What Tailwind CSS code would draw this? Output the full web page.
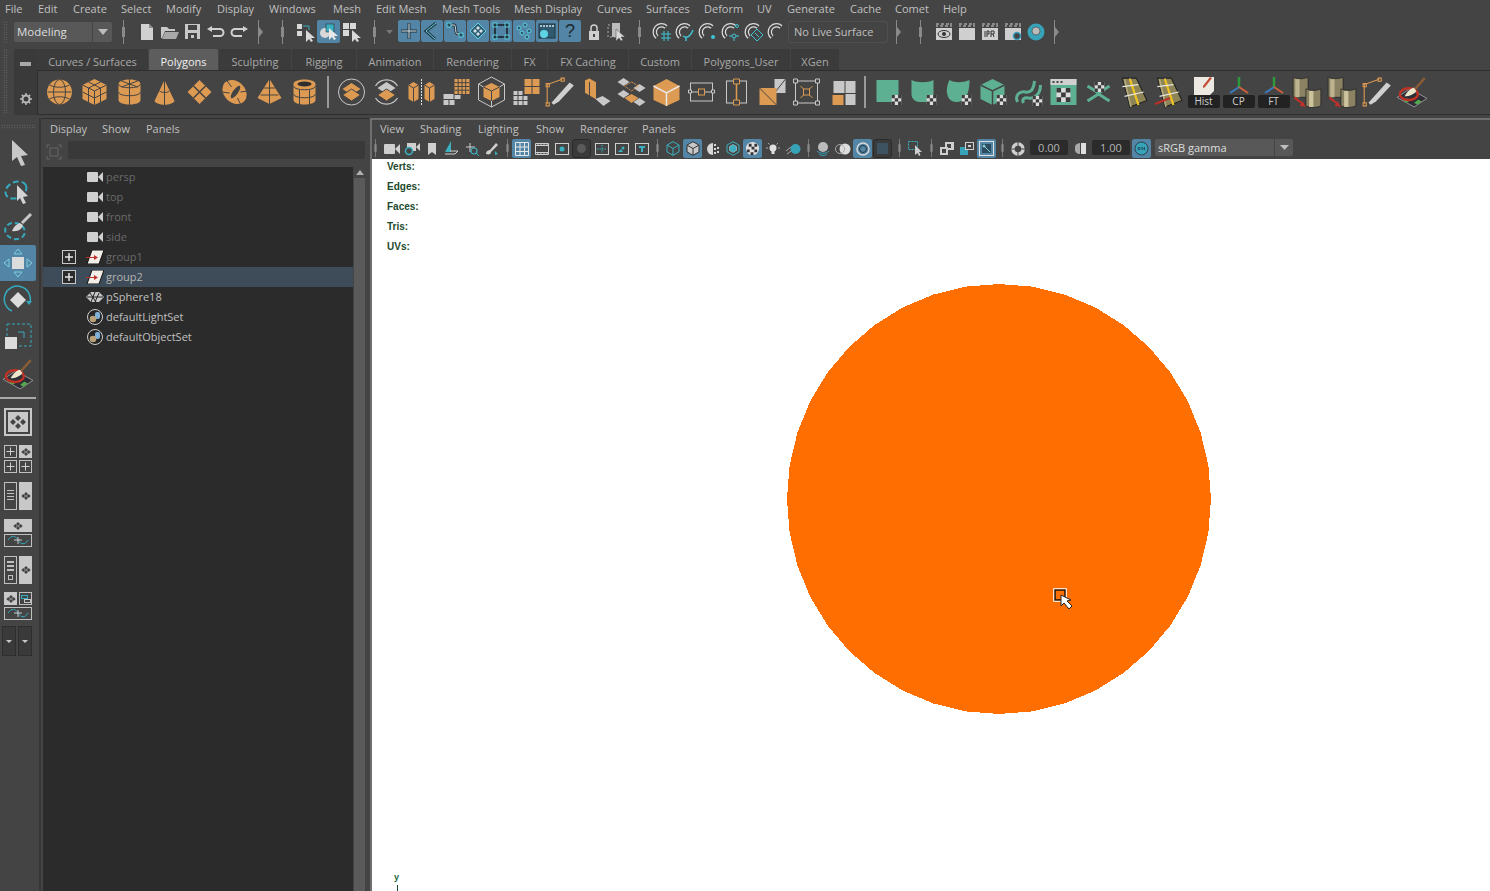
<!DOCTYPE html>
<html lang="en">
<head>
<meta charset="UTF-8">
<title>Maya</title>
<script src="https://cdn.jsdelivr.net/npm/@tailwindcss/browser@4"></script>
</head>
<body class="w-[1490px] h-[891px] overflow-hidden bg-[#444444] text-[#c0c0c0] text-[11px] leading-none font-['Open_Sans',sans-serif] flex flex-col">

<!-- shared bits -->
<svg class="hidden">
  <symbol id="h" viewBox="0 0 5 24"><path d="M2.500 0v24" stroke="#8a8a8a"/><rect x="1" y="7" width="3" height="10" fill="#8a8a8a"/></symbol>
  <symbol id="coll" viewBox="0 0 8 24"><path d="M1.500 0v24" stroke="#8a8a8a"/><path d="M2 7l4 5-4 5z" fill="#8a8a8a"/></symbol>
  <symbol id="chk" viewBox="0 0 10 10"><rect width="10" height="10" fill="#dcdcdc"/><path d="M0 0h3.300v3.300H0zM6.600 0H10v3.300H6.600zM3.300 3.300h3.300v3.300H3.300zM0 6.600h3.300V10H0zM6.600 6.600H10V10H6.600z" fill="#3b3b3b"/></symbol>
  <symbol id="cam" viewBox="0 0 16 10"><rect x="0" y="0" width="11" height="10" rx="1" fill="#cfcfcf"/><path d="M11 5l5-5v10z" fill="#cfcfcf"/></symbol>
  <symbol id="grp" viewBox="0 0 18 14"><path d="M6 0h12l-5 14H1z" fill="#f2efe8" stroke="#111"/><path d="M0 7.500h9" stroke="#c0302a"/><path d="M12 7.500L8 5v5z" fill="#c0302a"/></symbol>
  <symbol id="set" viewBox="0 0 16 16"><circle cx="8" cy="8" r="7.500" fill="#262626" stroke="#cfcfcf"/><rect x="8" y="3" width="5" height="7" rx="2" fill="#7fb0d8"/><circle cx="6" cy="10" r="3.300" fill="#b9a27a"/></symbol>
  <symbol id="plus" viewBox="0 0 14 14"><rect x=".5" y=".5" width="13" height="13" fill="#2b2b2b" stroke="#c8c8c8"/><path d="M3 7h8M7 3v8" stroke="#e6e6e6" stroke-width="1.500"/></symbol>
  <symbol id="cross" viewBox="0 0 13 13"><rect x=".5" y=".5" width="12" height="12" fill="none" stroke="#c0c0c0"/><path d="M2.500 6.500h8M6.500 2.500v8" stroke="#d0d0d0"/></symbol>
  <symbol id="dots" viewBox="0 0 10 8"><path d="M5 0l2 2-2 2-2-2zM2.300 2l2 2-2 2-2-2zM7.700 2l2 2-2 2-2-2zM5 4l2 2-2 2-2-2z" fill="#444"/></symbol>
  <symbol id="magnet" viewBox="0 0 20 20"><path d="M5 15A6.500 6.500 0 0 1 14 5" fill="none" stroke="#dcdcdc" stroke-width="4.500"/><path d="M5 15A6.500 6.500 0 0 1 14 5" fill="none" stroke="#444" stroke-width="2"/></symbol>
  <symbol id="barrel" viewBox="0 0 30 30"><path d="M2 1c4 2 10 2 14 0v19H2z" fill="#8b8264" stroke="#222" stroke-width=".7"/><rect x="4" y="3" width="4" height="17" fill="#bdb48f"/><path d="M14 12c4 2 10 2 14 0v16c-4 2-10 2-14 0z" fill="#8b8264" stroke="#222" stroke-width=".7"/><rect x="17" y="14" width="4" height="15" fill="#cdc49e"/><path d="M3 20l8 6" stroke="#c0302a" stroke-width="2"/><path d="M14 29l-6-1 3-4z" fill="#c0302a"/></symbol>
  <symbol id="road" viewBox="0 0 30 30"><path d="M6 2h13l10 21-16 6z" fill="#8d8458" stroke="#222"/><path d="M8 3l6 26M13 2l8 25" stroke="#b4ab7e" stroke-width="1.500"/><path d="M13 3l8 24" stroke="#eec21c" stroke-width="2"/><path d="M6 10l15-2M8 19l18-4" stroke="#e8e8e0" stroke-width="1.200"/></symbol>
  <symbol id="clap" viewBox="0 0 18 18"><path d="M1 1h3M6 1h3M11 1h3M15 1h2M1 3h2M5 3h3M10 3h3M15 3h2" stroke="#cfcfcf"/><rect x="1" y="5" width="16" height="12" fill="#cfcfcf"/></symbol>
  <symbol id="sculpt" viewBox="0 0 30 30"><path d="M1 20l12-8 16 9-12 8z" fill="#2e2e36" stroke="#b0b0b0" stroke-width=".7"/><path d="M7 23l3-2 3 2-3 2zM17 25l4-3 3 2-4 3z" fill="#54a84d"/><ellipse cx="12" cy="17" rx="8.500" ry="5.500" fill="none" stroke="#c33024" stroke-width="2.200"/><path d="M8 19c2-4 6-8 9-8l2 3c-2 3-6 5-11 5z" fill="#ece7cc"/><path d="M18 12l9-10" stroke="#8a5d34" stroke-width="2.200"/></symbol>
  <symbol id="kn" viewBox="0 0 30 30"><path d="M7 25L24 6l4 3-14 15-5 3z" fill="#d0d0d0"/><path d="M3 26V8L17 3" fill="none" stroke="#dd9a52"/><path d="M2 7h3v3H2zM16 2h3v3h-3zM2 25h3v3H2z" fill="none" stroke="#dd9a52"/></symbol>
</svg>

<!-- main menu -->
<nav class="h-[19px] pb-[2px] flex items-center pl-[5px] shrink-0">
  <span class="w-[33px]">File</span><span class="w-[35px]">Edit</span><span class="w-[48px]">Create</span><span class="w-[45px]">Select</span><span class="w-[51px]">Modify</span><span class="w-[52px]">Display</span><span class="w-[64px]">Windows</span><span class="w-[43px]">Mesh</span><span class="w-[66px]">Edit Mesh</span><span class="w-[72px]">Mesh Tools</span><span class="w-[83px]">Mesh Display</span><span class="w-[49px]">Curves</span><span class="w-[58px]">Surfaces</span><span class="w-[53px]">Deform</span><span class="w-[30px]">UV</span><span class="w-[63px]">Generate</span><span class="w-[45px]">Cache</span><span class="w-[48px]">Comet</span><span>Help</span>
</nav>

<!-- status line -->
<div class="h-[25px] flex items-center shrink-0">
  <div class="w-[14px] h-[22px] pl-[3px] flex flex-col justify-between"><div class="w-[5px] h-full bg-[radial-gradient(#777_0.6px,transparent_0.8px)] bg-[length:2.500px_2.500px]"></div></div>
  <div class="w-[98px] h-[20px] flex rounded-[2px] overflow-hidden">
    <div class="w-[78px] bg-[#585858] flex items-center pl-[3px] text-[#dedede] text-[11.500px]">Modeling</div>
    <div class="flex-1 ml-[1px] bg-[#585858] flex items-center justify-center"><svg class="w-[10px] h-[6px]" viewBox="0 0 10 6"><path d="M0 0h10L5 6z" fill="#bdbdbd"/></svg></div>
  </div>
  <div class="w-[23px] flex justify-center"><svg class="w-[5px] h-[24px]"><use href="#h"/></svg></div>
  <div class="flex w-[115px]">
    <div class="w-[23px] h-[23px] flex items-center justify-center"><svg class="w-[14px] h-[16px]" viewBox="0 0 14 16"><path d="M1 0h8l4 4v12H1z" fill="#d0d0d0"/><path d="M9 0v4h4" fill="#8c8c8c"/></svg></div>
    <div class="w-[23px] h-[23px] flex items-center justify-center"><svg class="w-[18px] h-[14px]" viewBox="0 0 18 14"><path d="M0 2h6l2 2h6v2H4L1 13H0z" fill="#c8c8c8"/><path d="M4 7h14l-3 7H1z" fill="#a8a8a8"/></svg></div>
    <div class="w-[23px] h-[23px] flex items-center justify-center"><svg class="w-[15px] h-[15px]" viewBox="0 0 15 15"><path d="M0 0h15v15H0z" fill="#c8c8c8"/><path d="M3 1h9v5H3z" fill="#444"/><rect x="3" y="9" width="9" height="6" fill="#444"/><rect x="6" y="11" width="3" height="3" fill="#c8c8c8"/></svg></div>
    <div class="w-[23px] h-[23px] flex items-center justify-center"><svg class="w-[18px] h-[12px]" viewBox="0 0 18 12"><path d="M0 3l5-3v2h8a4.500 4.500 0 0 1 0 9H6V9h7a2.500 2.500 0 0 0 0-5H5v2z" fill="#d0d0d0"/></svg></div>
    <div class="w-[23px] h-[23px] flex items-center justify-center"><svg class="w-[18px] h-[12px]" viewBox="0 0 18 12"><path d="M18 3l-5-3v2H5a4.500 4.500 0 0 0 0 9h7V9H5a2.500 2.500 0 0 1 0-5h8v2z" fill="#d0d0d0"/></svg></div>
  </div>
  <div class="w-[21px] flex justify-center"><svg class="w-[8px] h-[24px]"><use href="#coll"/></svg></div>
  <div class="w-[23px] flex justify-center"><svg class="w-[5px] h-[24px]"><use href="#h"/></svg></div>
  <div class="flex">
    <div class="w-[23px] h-[23px] flex items-center justify-center"><svg class="w-[20px] h-[20px]" viewBox="0 0 20 20"><path d="M1 2h5v5H1zM1 9h5v5H1z" fill="#d8d8d8"/><path d="M7 4h6v4" fill="none" stroke="#3ab0c0"/><path d="M10 8v12l3-3 2 3 2-1-2-3h4z" fill="#d8d8d8"/></svg></div>
    <div class="w-[23px] h-[23px] rounded-[2px] bg-[#5285a6] flex items-center justify-center"><svg class="w-[20px] h-[20px]" viewBox="0 0 20 20"><circle cx="6" cy="11" r="5" fill="#d8d8d8"/><rect x="7" y="2" width="8" height="8" fill="#3ab0c0" stroke="#222" stroke-width=".5"/><path d="M10 6v12l3-3 2 3 2-1-2-3h4z" fill="#e8e8e8"/></svg></div>
    <div class="w-[23px] h-[23px] flex items-center justify-center"><svg class="w-[20px] h-[20px]" viewBox="0 0 20 20"><path d="M1 1h6v6H1zM8 1h6v6H8zM1 8h6v6H1z" fill="#d8d8d8"/><path d="M10 8v12l3-3 2 3 2-1-2-3h4z" fill="#d8d8d8"/></svg></div>
  </div>
  <div class="w-[23px] flex justify-center"><svg class="w-[5px] h-[24px]"><use href="#h"/></svg></div>
  <div class="w-[12px] flex items-center"><svg class="w-[7px] h-[4px]" viewBox="0 0 7 4"><path d="M0 0h7L3.500 4z" fill="#777"/></svg></div>
  <div class="flex">
    <div class="w-[22px] h-[22px] mr-[1px] rounded-[2px] bg-[#5285a6] flex items-center justify-center"><svg class="w-[18px] h-[18px]" viewBox="0 0 18 18"><path d="M1 9h16M9 1v16" stroke="#223540" stroke-width="3"/><path d="M1.500 9h15M9 1.500v15" stroke="#d8e4ea"/></svg></div>
    <div class="w-[22px] h-[22px] mr-[1px] rounded-[2px] bg-[#5285a6] flex items-center justify-center"><svg class="w-[18px] h-[18px]" viewBox="0 0 18 18"><path d="M13 1L3 9l9 8" fill="none" stroke="#223540" stroke-width="3"/><path d="M13 1L3 9l9 8" fill="none" stroke="#5fd4e4"/></svg></div>
    <div class="w-[22px] h-[22px] mr-[1px] rounded-[2px] bg-[#5285a6] flex items-center justify-center"><svg class="w-[18px] h-[18px]" viewBox="0 0 18 18"><path d="M3 3h5c3 0 0 9 4 9h3" fill="none" stroke="#223540" stroke-width="3"/><path d="M3 3h5c3 0 0 9 4 9h3" fill="none" stroke="#d8e4ea"/><path d="M1 1h4v4H1zM13 11h4v4h-4z" fill="#2b4a5a" stroke="#5fd4e4"/></svg></div>
    <div class="w-[22px] h-[22px] mr-[1px] rounded-[2px] bg-[#5285a6] flex items-center justify-center"><svg class="w-[18px] h-[18px]" viewBox="0 0 18 18"><path d="M9 1l8 8-8 8-8-8z" fill="#2f5a70" stroke="#5fd4e4"/><path d="M9 4l2 2-2 2-2-2zM6 7l2 2-2 2-2-2zM12 7l2 2-2 2-2-2zM9 10l2 2-2 2-2-2z" fill="#cfe0e6"/></svg></div>
    <div class="w-[22px] h-[22px] mr-[1px] rounded-[2px] bg-[#5285a6] flex items-center justify-center"><svg class="w-[18px] h-[18px]" viewBox="0 0 18 18"><rect x="3" y="3" width="12" height="12" fill="none" stroke="#223540" stroke-width="2"/><path d="M1 1h4v4H1zM13 1h4v4h-4zM1 13h4v4H1zM13 13h4v4h-4z" fill="#223540" stroke="#5fd4e4"/></svg></div>
    <div class="w-[22px] h-[22px] mr-[1px] rounded-[2px] bg-[#5285a6] flex items-center justify-center"><svg class="w-[18px] h-[18px]" viewBox="0 0 18 18"><g fill="#2f5a70" stroke="#5fd4e4"><circle cx="4" cy="6" r="2"/><circle cx="10" cy="3" r="2"/><circle cx="14" cy="9" r="2"/><circle cx="7" cy="11" r="2"/><circle cx="12" cy="15" r="2"/></g></svg></div>
    <div class="w-[22px] h-[22px] mr-[1px] rounded-[2px] bg-[#5285a6] flex items-center justify-center"><svg class="w-[18px] h-[18px]" viewBox="0 0 18 18"><rect x="1" y="2" width="16" height="14" fill="#2f5a70" stroke="#223540"/><path d="M2 4h14" stroke="#d8e4ea" stroke-dasharray="2 1" stroke-width="1.500"/><circle cx="6" cy="12" r="4" fill="#5fd4e4"/></svg></div>
    <div class="w-[22px] h-[22px] mr-[1px] rounded-[2px] bg-[#5285a6] flex items-center justify-center text-[#1d2a30] text-[18px] font-['Liberation_Sans',sans-serif]">?</div>
    <div class="w-[23px] h-[23px] flex items-center justify-center"><svg class="w-[12px] h-[16px]" viewBox="0 0 12 16"><path d="M3 7V4a3 3 0 0 1 6 0v3" fill="none" stroke="#cfcfcf" stroke-width="1.500"/><rect x="1" y="7" width="10" height="9" fill="#cfcfcf"/><rect x="5" y="10" width="2" height="3" fill="#444"/></svg></div>
    <div class="w-[23px] h-[23px] flex items-center justify-center"><svg class="w-[20px] h-[20px]" viewBox="0 0 20 20"><rect x="1" y="3" width="10" height="12" fill="none" stroke="#aaa" stroke-dasharray="2 2"/><rect x="5" y="1" width="8" height="14" fill="#bbb"/><path d="M9 7v12l3-3 2 3 2-1-2-3h4z" fill="#d8d8d8" stroke="#444" stroke-width=".5"/></svg></div>
  </div>
  <div class="w-[22px] flex justify-center"><svg class="w-[5px] h-[24px]"><use href="#h"/></svg></div>
  <div class="flex w-[138px]">
    <div class="w-[23px] h-[23px] flex items-center justify-center"><svg class="w-[20px] h-[20px]"><use href="#magnet"/><path d="M9 12h10M9 16h10M12 9v10M16 9v10" stroke="#3fc4d4"/></svg></div>
    <div class="w-[23px] h-[23px] flex items-center justify-center"><svg class="w-[20px] h-[20px]"><use href="#magnet"/><path d="M8 14c4 3 8 0 10-6M11 15v4" fill="none" stroke="#3fc4d4" stroke-width="1.500"/></svg></div>
    <div class="w-[23px] h-[23px] flex items-center justify-center"><svg class="w-[20px] h-[20px]"><use href="#magnet"/><circle cx="15" cy="15" r="2" fill="#3fc4d4"/></svg></div>
    <div class="w-[23px] h-[23px] flex items-center justify-center"><svg class="w-[20px] h-[20px]"><use href="#magnet"/><g fill="none" stroke="#3fc4d4"><circle cx="16" cy="4" r="1.500"/><circle cx="13" cy="14" r="2"/><path d="M8 14h3M15 14h3M13 16v3"/></g></svg></div>
    <div class="w-[23px] h-[23px] flex items-center justify-center"><svg class="w-[20px] h-[20px]"><use href="#magnet"/><path d="M13 7l6 6-6 6-6-6z" fill="#444" stroke="#3fc4d4"/><path d="M11 11l4 4" stroke="#3fc4d4"/></svg></div>
    <div class="w-[23px] h-[23px] flex items-center justify-center"><svg class="w-[20px] h-[20px]"><use href="#magnet"/></svg></div>
  </div>
  <div class="w-[100px] h-[22px] border border-[#4f4f4f] rounded-[2px] flex items-center pl-[5px]">No Live Surface</div>
  <div class="w-[21px] flex justify-center"><svg class="w-[8px] h-[24px]"><use href="#coll"/></svg></div>
  <div class="w-[23px] flex justify-center"><svg class="w-[5px] h-[24px]"><use href="#h"/></svg></div>
  <div class="flex w-[115px]">
    <div class="w-[23px] h-[23px] flex items-center justify-center"><svg class="w-[18px] h-[18px]"><use href="#clap"/><ellipse cx="9" cy="11" rx="6" ry="3.500" fill="none" stroke="#333"/><circle cx="9" cy="11" r="2" fill="#333"/></svg></div>
    <div class="w-[23px] h-[23px] flex items-center justify-center"><svg class="w-[18px] h-[18px]"><use href="#clap"/></svg></div>
    <div class="w-[23px] h-[23px] flex items-center justify-center"><svg class="w-[18px] h-[18px]"><use href="#clap"/><path d="M4 8v6M6 8v6M6 8h2v3H6M10 8v6M10 8h3v3h-3M12 11l1 3" fill="none" stroke="#333"/></svg></div>
    <div class="w-[23px] h-[23px] flex items-center justify-center"><svg class="w-[18px] h-[18px]"><use href="#clap"/><circle cx="13" cy="13" r="3.500" fill="#444" stroke="#3a9fc0" stroke-width="1.500"/></svg></div>
    <div class="w-[23px] h-[23px] flex items-center justify-center"><svg class="w-[18px] h-[18px]" viewBox="0 0 18 18"><circle cx="9" cy="9" r="8.500" fill="#37a3b8"/><circle cx="9" cy="8" r="4" fill="#bbb" stroke="#222" stroke-width=".5"/></svg></div>
  </div>
  <div class="w-[20px] flex justify-center"><svg class="w-[8px] h-[24px]"><use href="#coll"/></svg></div>
</div>

<!-- shelf -->
<div class="h-[66px] mt-[5px] flex shrink-0">
  <div class="w-[14px] pl-[3px]"><div class="w-[5px] h-full bg-[radial-gradient(#777_0.6px,transparent_0.8px)] bg-[length:2.500px_2.500px]"></div></div>
  <div class="w-[23px] h-full bg-[#3a3a3a] flex flex-col items-center justify-between py-[10px]">
    <div class="w-[11px] h-[4px] mt-[3px] bg-[#a8a8a8]"></div>
    <svg class="w-[12px] h-[12px]" viewBox="0 0 12 12"><circle cx="6" cy="6" r="3.500" fill="none" stroke="#b8b8b8" stroke-width="2"/><path d="M6 0v2M6 10v2M0 6h2M10 6h2M1.800 1.800l1.400 1.400M8.800 8.800l1.400 1.400M10.200 1.800L8.800 3.200M3.200 8.800l-1.400 1.400" stroke="#b8b8b8" stroke-width="1.500"/></svg>
  </div>
  <div class="flex-1 flex flex-col">
    <div class="h-[22px] flex items-end gap-[1px] text-[#a8a8a8] border-b border-[#2e2e2e]">
      <div class="w-[111px] h-[21px] pt-[3px] rounded-t-[2px] bg-[#3b3b3b] flex items-center justify-center">Curves / Surfaces</div>
      <div class="w-[69px] h-[21px] pt-[3px] rounded-t-[2px] bg-[#5d5d5d] text-[#f0f0f0] flex items-center justify-center">Polygons</div>
      <div class="w-[72px] h-[21px] pt-[3px] rounded-t-[2px] bg-[#3b3b3b] flex items-center justify-center">Sculpting</div>
      <div class="w-[64px] h-[21px] pt-[3px] rounded-t-[2px] bg-[#3b3b3b] flex items-center justify-center">Rigging</div>
      <div class="w-[76px] h-[21px] pt-[3px] rounded-t-[2px] bg-[#3b3b3b] flex items-center justify-center">Animation</div>
      <div class="w-[77px] h-[21px] pt-[3px] rounded-t-[2px] bg-[#3b3b3b] flex items-center justify-center">Rendering</div>
      <div class="w-[35px] h-[21px] pt-[3px] rounded-t-[2px] bg-[#3b3b3b] flex items-center justify-center">FX</div>
      <div class="w-[80px] h-[21px] pt-[3px] rounded-t-[2px] bg-[#3b3b3b] flex items-center justify-center">FX Caching</div>
      <div class="w-[62px] h-[21px] pt-[3px] rounded-t-[2px] bg-[#3b3b3b] flex items-center justify-center">Custom</div>
      <div class="w-[98px] h-[21px] pt-[3px] rounded-t-[2px] bg-[#3b3b3b] flex items-center justify-center">Polygons_User</div>
      <div class="w-[48px] h-[21px] pt-[3px] rounded-t-[2px] bg-[#3b3b3b] flex items-center justify-center">XGen</div>
    </div>
    <div class="flex-1 flex items-center pl-[4px] pb-[2px] border-b border-[#2e2e2e] border-l border-l-[#2e2e2e]">
      <!-- polygon primitives -->
      <svg class="w-[35px] h-[32px]" viewBox="-1.500 0 35 32"><circle cx="16" cy="16" r="12.500" fill="#dd9a52"/><g fill="none" stroke="#444"><ellipse cx="16" cy="16" rx="6" ry="12.500"/><path d="M4 16h24M6 9c6 3 14 3 20 0M6 23c6-3 14-3 20 0"/></g></svg>
      <svg class="w-[35px] h-[32px]" viewBox="-1.500 0 35 32"><path d="M16 3l12 6v14l-12 6-12-6V9z" fill="#dd9a52"/><path d="M4 9l12 6 12-6M16 15v14M10 6l12 6M22 6L10 12M4 16l12 6 12-6M10 12v14M22 12v14" fill="none" stroke="#444"/></svg>
      <svg class="w-[35px] h-[32px]" viewBox="-1.500 0 35 32"><path d="M5 8c0-6 22-6 22 0v16c0 6-22 6-22 0z" fill="#dd9a52"/><path d="M5 8c0 5 22 5 22 0M5 16c0 5 22 5 22 0M16 12v17M16 3v9M8 5l16 6M24 5L8 11" fill="none" stroke="#444"/></svg>
      <svg class="w-[35px] h-[32px]" viewBox="-1.500 0 35 32"><path d="M16 4l10 21c-3 5-17 5-20 0z" fill="#dd9a52"/><path d="M16 4v25M11 15c3 2 7 2 10 0" fill="none" stroke="#444"/></svg>
      <svg class="w-[35px] h-[32px]" viewBox="-1.500 0 35 32"><path d="M16 4l12 12-12 12L4 16z" fill="#dd9a52"/><path d="M10 10l12 12M22 10L10 22" stroke="#444" stroke-width="1.500"/></svg>
      <svg class="w-[35px] h-[32px]" viewBox="-1.500 0 35 32"><ellipse cx="16" cy="16" rx="13.500" ry="10.500" transform="rotate(45 16 16)" fill="#dd9a52"/><ellipse cx="17" cy="16" rx="7.500" ry="2.500" transform="rotate(-55 17 16)" fill="#444"/><path d="M8 4l5 7M3 16l8 1M22 28l-3-6M29 15l-7 1" stroke="#444"/></svg>
      <svg class="w-[35px] h-[32px]" viewBox="-1.500 0 35 32"><path d="M16 3l12 19-12 6-12-6z" fill="#dd9a52"/><path d="M16 3v25M10 12h12M7 19h18" stroke="#444"/></svg>
      <svg class="w-[35px] h-[32px]" viewBox="-1.500 0 35 32"><path d="M5 8c0-6 22-6 22 0v16c0 6-22 6-22 0z" fill="#dd9a52"/><ellipse cx="16" cy="8" rx="7" ry="2.500" fill="#2e2e2e"/><path d="M5 10c0 5 22 5 22 0M5 18c0 5 22 5 22 0M11 14v15M21 14v15" fill="none" stroke="#444"/></svg>
      <div class="w-[12px] h-[32px] flex justify-center"><div class="w-[2px] h-full bg-[#9a9a9a]"></div></div>
      <!-- modelling tools -->
      <svg class="w-[35px] h-[32px]" viewBox="-1.500 0 35 32"><circle cx="16" cy="16" r="13" fill="none" stroke="#c8c8c8"/><path d="M16 7l9 6-9 6-9-6z" fill="#dd9a52"/><path d="M16 13l9 6-9 6-9-6z" fill="#dd9a52" stroke="#444"/></svg>
      <svg class="w-[35px] h-[32px]" viewBox="-1.500 0 35 32"><path d="M5 10A13 13 0 0 1 27 10M27 22A13 13 0 0 1 5 22" fill="none" stroke="#c8c8c8" stroke-width="1.300"/><path d="M16 6l9 6-9 6-9-6z" fill="#c8c8c8"/><path d="M16 13l9 6-9 6-9-6z" fill="#dd9a52" stroke="#444"/></svg>
      <svg class="w-[35px] h-[32px]" viewBox="-1.500 0 35 32"><path d="M3 9l5-3 5 3v14l-5 3-5-3zM19 9l5-3 5 3v14l-5 3-5-3z" fill="#dd9a52"/><path d="M3 9l5 3 5-3M8 12v14M19 9l5 3 5-3M24 12v14" fill="none" stroke="#444"/><path d="M16 3v26" stroke="#e0e0e0" stroke-dasharray="2 1"/></svg>
      <svg class="w-[35px] h-[32px]" viewBox="-1.500 0 35 32"><rect x="14" y="3" width="15" height="15" fill="#dd9a52"/><path d="M17.700 3v15M21.500 3v15M25.200 3v15M14 6.700h15M14 10.500h15M14 14.200h15" stroke="#444"/><path d="M3 18h10v5H3zM14 19h6v4h-6zM3 24h5v5H3zM9 24h5v5H9z" fill="#c8c8c8"/></svg>
      <svg class="w-[35px] h-[32px]" viewBox="-1.500 0 35 32"><path d="M16 1l13 7v16l-13 7-13-7V8z" fill="none" stroke="#c8c8c8"/><path d="M16 7l8 4v10l-8 4-8-4V11z" fill="#dd9a52"/><path d="M8 11l8 4 8-4M16 15v10" fill="none" stroke="#444"/><path d="M3 8l5 3M29 8l-5 3M16 31v-6" stroke="#c8c8c8"/></svg>
      <svg class="w-[35px] h-[32px]" viewBox="-1.500 0 35 32"><path d="M14 3h7v7h-7zM22 3h7v7h-7zM14 11h7v7h-7zM22 11h7v7h-7z" fill="#dd9a52"/><path d="M3 15h4v4H3zM8 15h4v4H8zM3 20h4v4H3zM8 20h4v4H8zM13 20h4v4h-4zM3 25h4v4H3zM8 25h4v4H8zM13 25h4v4h-4z" fill="#c8c8c8"/></svg>
      <svg class="w-[35px] h-[32px]"><use href="#kn" width="32" height="32"/></svg>
      <svg class="w-[35px] h-[32px]" viewBox="-1.500 0 35 32"><path d="M9 2l7 4v18l-7-4-5-3V4z" fill="#dd9a52" stroke="#444"/><path d="M15 23l7-3 8 5-7 5z" fill="#c8c8c8"/><path d="M9 6v15" stroke="#444"/></svg>
      <svg class="w-[35px] h-[32px]" viewBox="-1.500 0 35 32"><path d="M8 2l6 4-6 4-6-4zM24 8l6 4-6 4-6-4zM8 14l6 4-6 4-6-4zM24 22l6 4-6 4-6-4z" fill="#c8c8c8"/><path d="M16 18l7 4-7 5-7-5z" fill="#dd9a52"/><path d="M16 6l7 4-7 5-7-5z" fill="none" stroke="#dd9a52" stroke-dasharray="2 1"/></svg>
      <svg class="w-[35px] h-[32px]" viewBox="-1.500 0 35 32"><path d="M16 3l13 7v14l-13 6-13-6V10z" fill="#dd9a52"/><path d="M3 10l13 7 13-7M16 17v13" fill="none" stroke="#e8e8e8" stroke-width="1.500"/></svg>
      <svg class="w-[35px] h-[32px]" viewBox="-1.500 0 35 32"><rect x="5" y="7" width="22" height="18" fill="none" stroke="#c8c8c8"/><path d="M3 16h26" stroke="#c8c8c8"/><rect x="13" y="13" width="6" height="6" fill="#444" stroke="#dd9a52"/><path d="M3 14h3v3H3zM26 14h3v3h-3z" fill="#444" stroke="#c8c8c8"/></svg>
      <svg class="w-[35px] h-[32px]" viewBox="-1.500 0 35 32"><rect x="6" y="5" width="20" height="22" fill="none" stroke="#c8c8c8"/><path d="M16 8v16" stroke="#dd9a52" stroke-width="1.500"/><path d="M13 3h6v5h-6zM13 24h6v5h-6z" fill="#444" stroke="#dd9a52"/></svg>
      <svg class="w-[35px] h-[32px]" viewBox="-1.500 0 35 32"><path d="M19 3h11v14H19z" fill="#c8c8c8"/><path d="M30 3L19 17" stroke="#444"/><rect x="4" y="12" width="17" height="17" fill="#dd9a52"/><path d="M4 12l17 17" stroke="#444"/></svg>
      <svg class="w-[35px] h-[32px]" viewBox="-1.500 0 35 32"><rect x="5" y="5" width="22" height="22" fill="none" stroke="#c8c8c8"/><path d="M10 10l12 12M22 10L10 22" stroke="#dd9a52"/><rect x="13" y="13" width="6" height="6" fill="#444" stroke="#dd9a52"/><path d="M3 3h4v4H3zM25 3h4v4h-4zM3 25h4v4H3zM25 25h4v4h-4z" fill="#444" stroke="#c8c8c8"/></svg>
      <svg class="w-[35px] h-[32px]" viewBox="-1.500 0 35 32"><path d="M8 5h11v12H8zM20 5h10v12H20zM20 18h10v11H20z" fill="#c8c8c8"/><rect x="7" y="19" width="11" height="10" fill="#dd9a52"/></svg>
      <div class="w-[12px] h-[32px] flex justify-center"><div class="w-[2px] h-full bg-[#9a9a9a]"></div></div>
      <!-- uv tools -->
      <svg class="w-[35px] h-[32px]" viewBox="-1.500 0 35 32"><rect x="4" y="4" width="22" height="22" fill="#5eb092"/><use href="#chk" x="19" y="19" width="10" height="10"/></svg>
      <svg class="w-[35px] h-[32px]" viewBox="-1.500 0 35 32"><path d="M4 4c6 3 16 3 22 0v22H12C7 26 4 22 4 18z" fill="#5eb092"/><use href="#chk" x="19" y="19" width="10" height="10"/></svg>
      <svg class="w-[35px] h-[32px]" viewBox="-1.500 0 35 32"><path d="M7 4c5 3 13 3 20 0 0 12-3 22-13 22S2 14 7 4z" fill="#5eb092"/><use href="#chk" x="19" y="19" width="10" height="10"/></svg>
      <svg class="w-[35px] h-[32px]" viewBox="-1.500 0 35 32"><path d="M15 3l12 6v14l-12 6-12-6V9z" fill="#5eb092"/><path d="M3 9l12 6 12-6M15 15v14" fill="none" stroke="#444" stroke-width="1.500"/><use href="#chk" x="19" y="19" width="10" height="10"/></svg>
      <svg class="w-[35px] h-[32px]" viewBox="-1.500 0 35 32"><path d="M5 26c-3-7 2-11 8-10 5 1 8-2 9-11" fill="none" stroke="#5eb092" stroke-width="3"/><path d="M11 27c-2-4 1-6 5-5 5 1 12-3 12-13" fill="none" stroke="#5eb092" stroke-width="3"/><use href="#chk" x="20" y="20" width="10" height="10"/></svg>
      <svg class="w-[35px] h-[32px]" viewBox="-1.500 0 35 32"><rect x="3" y="3" width="26" height="26" fill="#5eb092"/><rect x="3" y="3" width="26" height="6" fill="#d0d0d0"/><path d="M5 5h2v2H5zM9 5h2v2H9zM13 5h2v2h-2z" fill="#444"/><use href="#chk" x="8" y="12" width="16" height="14"/></svg>
      <svg class="w-[35px] h-[32px]" viewBox="-1.500 0 35 32"><path d="M3 10l11 7 11-7M3 25l11-7 11 7" fill="none" stroke="#5eb092" stroke-width="3" transform="translate(2 0)"/><use href="#chk" x="12" y="6" width="10" height="10"/></svg>
      <svg class="w-[35px] h-[32px]"><use href="#road" width="32" height="32"/></svg>
      <svg class="w-[35px] h-[32px]"><use href="#road" width="32" height="32"/><path d="M4 28l15-6" stroke="#c0302a" stroke-width="2"/></svg>
      <div class="w-[35px] h-[34px] mb-[-2px] flex flex-col items-center">
        <svg class="w-[24px] h-[19px]" viewBox="0 0 24 19"><path d="M2 1h20v14l-4 4H2z" fill="#ece8e2"/><path d="M11 12l2-1 7-9-2-1-7 9z" fill="#c0492f"/></svg>
        <div class="w-[32px] h-[13px] rounded-[2px] bg-[#222222] text-[#cfcfcf] text-[10px] flex items-center justify-center">Hist</div>
      </div>
      <div class="w-[35px] h-[34px] mb-[-2px] flex flex-col items-center">
        <svg class="w-[24px] h-[19px]" viewBox="0 0 24 19"><path d="M12 1v10" stroke="#2f9a3a" stroke-width="2.500"/><path d="M12 11L3 17" stroke="#3a7cc0" stroke-width="2"/><path d="M12 11l9 6" stroke="#d05f3a" stroke-width="2"/></svg>
        <div class="w-[32px] h-[13px] rounded-[2px] bg-[#222222] text-[#cfcfcf] text-[10px] flex items-center justify-center">CP</div>
      </div>
      <div class="w-[35px] h-[34px] mb-[-2px] flex flex-col items-center">
        <svg class="w-[24px] h-[19px]" viewBox="0 0 24 19"><path d="M12 1v10" stroke="#2f9a3a" stroke-width="2.500"/><path d="M12 11L3 17" stroke="#3a7cc0" stroke-width="2"/><path d="M12 11l9 6" stroke="#d05f3a" stroke-width="2"/></svg>
        <div class="w-[32px] h-[13px] rounded-[2px] bg-[#222222] text-[#cfcfcf] text-[10px] flex items-center justify-center">FT</div>
      </div>
      <svg class="w-[35px] h-[32px]"><use href="#barrel" width="32" height="32"/></svg>
      <svg class="w-[35px] h-[32px]"><use href="#barrel" width="32" height="32"/></svg>
      <svg class="w-[35px] h-[32px]"><use href="#kn" width="32" height="32"/></svg>
      <svg class="w-[35px] h-[32px]"><use href="#sculpt" width="32" height="32"/></svg>
    </div>
  </div>
</div>

<!-- work area -->
<div class="flex-1 min-h-0 mt-[3px] flex">
  <!-- toolbox -->
  <aside class="w-[41px] shrink-0 border-r-2 border-[#363636] flex flex-col items-stretch pr-[3px]">
    <div class="h-[6px] mt-[6px] mx-[1px] bg-[radial-gradient(#777_0.6px,transparent_0.8px)] bg-[length:2.500px_2.500px]"></div>
    <div class="h-[36px] mt-[7px] flex items-center justify-center"><svg class="w-[18px] h-[26px] ml-[3px] mt-[-4px]" viewBox="0 0 18 26"><path d="M1 0l16 15-7 1 4 9-4 1-4-9-5 4z" fill="#c8c8c8"/></svg></div>
    <div class="h-[36px] flex items-center justify-center"><svg class="w-[28px] h-[28px]" viewBox="0 0 28 28"><ellipse cx="12" cy="13" rx="11" ry="8" transform="rotate(-25 12 13)" fill="none" stroke="#35aabf" stroke-width="2" stroke-dasharray="6 3"/><path d="M13 8l11 11-5 1 3 6-3 1-3-6-3 3z" fill="#d4d4d4"/></svg></div>
    <div class="h-[36px] flex items-center justify-center"><svg class="w-[30px] h-[30px]" viewBox="0 0 30 30"><ellipse cx="12" cy="19" rx="10" ry="8" transform="rotate(15 12 19)" fill="none" stroke="#35aabf" stroke-width="2" stroke-dasharray="5 3"/><path d="M9 19c2-5 5-7 8-8l3 2c-1 4-5 7-11 6z" fill="#d4d4d4"/><path d="M19 11l9-9" stroke="#c8c8c8" stroke-width="3"/></svg></div>
    <div class="h-[36px] bg-[#5285a6] rounded-r-[2px] flex items-center justify-center"><svg class="w-[32px] h-[32px]" viewBox="0 0 32 32"><rect x="10" y="10" width="12" height="12" fill="#dcdcdc"/><path d="M16 2l4 5h-8zM16 30l4-5h-8zM2 16l5-4v8zM30 16l-5-4v8z" fill="none" stroke="#7fd0dc"/></svg></div>
    <div class="h-[36px] mt-[1px] flex items-center justify-center"><svg class="w-[30px] h-[30px]" viewBox="0 0 30 30"><path d="M9 26A13 13 0 1 1 27 17" fill="none" stroke="#35aabf" stroke-width="1.500"/><path d="M23 16h6l-3 4z" fill="#35aabf"/><path d="M15 7l8 8-8 8-8-8z" fill="#dcdcdc"/></svg></div>
    <div class="h-[36px] flex items-center justify-center"><svg class="w-[28px] h-[28px]" viewBox="0 0 28 28"><rect x="3" y="2" width="24" height="22" fill="none" stroke="#35aabf" stroke-dasharray="3 2"/><path d="M14 10h6v6" fill="none" stroke="#35aabf"/><rect x="1" y="15" width="12" height="12" fill="#dcdcdc"/></svg></div>
    <div class="h-[40px] flex items-center justify-center"><svg class="w-[32px] h-[32px]"><use href="#sculpt" width="32" height="32"/></svg></div>
    <div class="h-[2px] mt-[3px] bg-[#aaaaaa]"></div>
    <div class="mt-[9px] mx-[4px] h-[28px] bg-[#c8c8c8] p-[2px]"><div class="h-full border-2 border-[#444] flex items-center justify-center"><svg class="w-[16px] h-[14px]" viewBox="0 0 16 14"><path d="M8 0l3 3-3 3-3-3zM3 4l3 3-3 3-3-3zM13 4l3 3-3 3-3-3zM8 8l3 3-3 3-3-3z" fill="#444"/></svg></div></div>
    <div class="mt-[9px] mx-[4px] grid grid-cols-2 gap-[2px]">
      <svg class="w-[13px] h-[13px]"><use href="#cross"/></svg>
      <div class="h-[13px] bg-[#c8c8c8] flex items-center justify-center"><svg class="w-[10px] h-[8px]"><use href="#dots"/></svg></div>
      <svg class="w-[13px] h-[13px]"><use href="#cross"/></svg>
      <svg class="w-[13px] h-[13px]"><use href="#cross"/></svg>
    </div>
    <div class="mt-[9px] mx-[4px] grid grid-cols-2 gap-[2px] h-[28px]">
      <div class="border border-[#c0c0c0] flex flex-col items-center justify-center gap-[2px]"><div class="w-[7px] h-[1px] bg-[#c0c0c0]"></div><div class="w-[7px] h-[9px] bg-[repeating-linear-gradient(#c0c0c0_0_1px,transparent_1px_3px)]"></div></div>
      <div class="bg-[#c8c8c8] flex items-center justify-center"><svg class="w-[10px] h-[8px]"><use href="#dots"/></svg></div>
    </div>
    <div class="mt-[9px] mx-[4px] flex flex-col gap-[2px] h-[28px]">
      <div class="h-[13px] bg-[#c8c8c8] flex items-center justify-center"><svg class="w-[10px] h-[8px]"><use href="#dots"/></svg></div>
      <div class="h-[13px] border border-[#c0c0c0] flex items-center justify-center"><svg class="w-[24px] h-[9px]" viewBox="0 0 24 9"><path d="M2 4c4-5 7-5 10 0s7 5 10 0" fill="none" stroke="#35aabf"/><path d="M8 4h8M12 1v7" stroke="#c8c8c8"/></svg></div>
    </div>
    <div class="mt-[9px] mx-[4px] grid grid-cols-2 gap-[2px] h-[28px]">
      <div class="border border-[#c0c0c0] flex flex-col items-center justify-center gap-[2px]"><div class="w-[7px] h-[12px] bg-[repeating-linear-gradient(#c0c0c0_0_2px,transparent_2px_4px)]"></div><div class="w-[5px] h-[5px] border border-[#c0c0c0]"></div></div>
      <div class="bg-[#c8c8c8] flex items-center justify-center"><svg class="w-[10px] h-[8px]"><use href="#dots"/></svg></div>
    </div>
    <div class="mt-[8px] mx-[4px] grid grid-cols-2 gap-[2px]">
      <div class="h-[13px] bg-[#c8c8c8] flex items-center justify-center"><svg class="w-[10px] h-[8px]"><use href="#dots"/></svg></div>
      <div class="h-[13px] border border-[#c0c0c0] flex items-center justify-center"><svg class="w-[10px] h-[8px]" viewBox="0 0 10 8"><rect x="0.500" y="0.500" width="6" height="3" fill="none" stroke="#35aabf"/><rect x="3.500" y="4.500" width="6" height="3" fill="none" stroke="#c8c8c8"/></svg></div>
      <div class="col-span-2 h-[13px] border border-[#c0c0c0] flex items-center justify-center"><svg class="w-[24px] h-[9px]" viewBox="0 0 24 9"><path d="M2 4c4-5 7-5 10 0s7 5 10 0" fill="none" stroke="#35aabf"/><path d="M8 4h8M12 1v7" stroke="#c8c8c8"/></svg></div>
    </div>
    <div class="mt-[6px] ml-[2px] mr-[4px] flex gap-[2px]">
      <div class="flex-1 h-[30px] bg-[#3a3a3a] border border-[#2e2e2e] flex items-center justify-center"><svg class="w-[6px] h-[3px]" viewBox="0 0 6 3"><path d="M0 0h6L3 3z" fill="#c8c8c8"/></svg></div>
      <div class="flex-1 h-[30px] bg-[#3a3a3a] border border-[#2e2e2e] flex items-center justify-center"><svg class="w-[6px] h-[3px]" viewBox="0 0 6 3"><path d="M0 0h6L3 3z" fill="#c8c8c8"/></svg></div>
    </div>
  </aside>

  <!-- outliner -->
  <section class="w-[327px] shrink-0 ml-[1px] flex flex-col border-t border-[#2e2e2e]">
    <div class="h-[19px] pb-[2px] flex items-center pl-[8px] mt-[1px]"><span class="w-[52px]">Display</span><span class="w-[44px]">Show</span><span>Panels</span></div>
    <div class="h-[20px] mt-[1px] flex items-center">
      <svg class="w-[16px] h-[16px] ml-[4px] mt-[3px]" viewBox="0 0 16 16"><path d="M1 4V1h3M12 1h3v3M15 12v3h-3M4 15H1v-3M4 4h8v8H4z" fill="none" stroke="#666"/></svg>
      <div class="ml-[6px] w-[297px] h-[18px] rounded-[2px] bg-[#393939]"></div>
    </div>
    <div class="flex-1 min-h-0 mt-[7px] flex mr-[3px]">
      <div class="w-[311px] ml-[1px] bg-[#2b2b2b] flex flex-col">
        <div class="h-[20px] flex items-center text-[#6a6a6a]"><svg class="w-[16px] h-[10px] ml-[44px] mr-[3px]"><use href="#cam"/></svg><span class="mb-[2px]">persp</span></div>
        <div class="h-[20px] flex items-center text-[#6a6a6a]"><svg class="w-[16px] h-[10px] ml-[44px] mr-[3px]"><use href="#cam"/></svg><span class="mb-[2px]">top</span></div>
        <div class="h-[20px] flex items-center text-[#6a6a6a]"><svg class="w-[16px] h-[10px] ml-[44px] mr-[3px]"><use href="#cam"/></svg><span class="mb-[2px]">front</span></div>
        <div class="h-[20px] flex items-center text-[#6a6a6a]"><svg class="w-[16px] h-[10px] ml-[44px] mr-[3px]"><use href="#cam"/></svg><span class="mb-[2px]">side</span></div>
        <div class="h-[20px] flex items-center text-[#6a6a6a]"><svg class="w-[14px] h-[14px] ml-[19px]"><use href="#plus"/></svg><svg class="w-[18px] h-[14px] ml-[10px] mr-[2px]"><use href="#grp"/></svg><span class="mb-[2px]">group1</span></div>
        <div class="h-[20px] flex items-center text-[#b4b4b4] bg-[#3e4b58]"><svg class="w-[14px] h-[14px] ml-[19px]"><use href="#plus"/></svg><svg class="w-[18px] h-[14px] ml-[10px] mr-[2px]"><use href="#grp"/></svg><span class="mb-[2px]">group2</span></div>
        <div class="h-[20px] flex items-center"><svg class="w-[18px] h-[12px] ml-[43px] mr-[2px]" viewBox="0 0 18 12"><path d="M0 6l5-5h8l5 5-5 5H5z" fill="#c8c8c8"/><path d="M4 2l6 9M9 1L5 11M13 2L9 11M1 6h16" stroke="#222"/></svg><span class="mb-[2px]">pSphere18</span></div>
        <div class="h-[20px] flex items-center"><svg class="w-[16px] h-[16px] ml-[44px] mr-[3px]"><use href="#set"/></svg><span class="mb-[2px]">defaultLightSet</span></div>
        <div class="h-[20px] flex items-center"><svg class="w-[16px] h-[16px] ml-[44px] mr-[3px]"><use href="#set"/></svg><span class="mb-[2px]">defaultObjectSet</span></div>
      </div>
      <div class="w-[13px] flex flex-col items-center">
        <svg class="w-[8px] h-[5px] mt-[3px]" viewBox="0 0 8 5"><path d="M4 0l4 5H0z" fill="#b0b0b0"/></svg>
        <div class="w-[11px] flex-1 mt-[3px] bg-[#5a5a5a]"></div>
      </div>
    </div>
  </section>

  <!-- viewport -->
  <main class="flex-1 min-w-0 ml-[1px] flex flex-col border-t-2 border-l-2 border-[#6f6f6f]">
    <div class="h-[19px] pb-[2px] flex items-center pl-[8px]"><span class="w-[40px]">View</span><span class="w-[58px]">Shading</span><span class="w-[58px]">Lighting</span><span class="w-[44px]">Show</span><span class="w-[62px]">Renderer</span><span>Panels</span></div>
    <div class="h-[20px] flex items-start">
      <div class="w-[6px] flex justify-center"><svg class="w-[5px] h-[18px]"><use href="#h"/></svg></div>
      <div class="w-[4px]"></div>
      <div class="w-[20px] h-[19px] flex items-center justify-center"><svg class="w-[16px] h-[10px]"><use href="#cam"/></svg></div>
      <div class="w-[20px] h-[19px] flex items-center justify-center"><svg class="w-[16px] h-[14px]" viewBox="0 0 16 14"><rect x="3" y="1" width="9" height="8" fill="#cfcfcf"/><path d="M12 5l4-4v8z" fill="#cfcfcf"/><circle cx="5" cy="9" r="3.500" fill="#444" stroke="#3ab0c0" stroke-width="1.500"/></svg></div>
      <div class="w-[20px] h-[19px] flex items-center justify-center"><svg class="w-[8px] h-[12px]" viewBox="0 0 8 12"><path d="M0 0h8v12L4 9l-4 3z" fill="#cfcfcf"/></svg></div>
      <div class="w-[20px] h-[19px] flex items-center justify-center"><svg class="w-[16px] h-[15px]" viewBox="0 0 16 15"><path d="M7 0v11H1z" fill="#3ab0c0"/><path d="M1 13h10l3-3H6" fill="none" stroke="#cfcfcf"/></svg></div>
      <div class="w-[20px] h-[19px] flex items-center justify-center"><svg class="w-[14px] h-[14px]" viewBox="0 0 14 14"><path d="M5 1v9M1 5h9" stroke="#cfcfcf"/><circle cx="9" cy="9" r="3" fill="none" stroke="#3ab0c0" stroke-width="1.200"/><path d="M11 11l3 3" stroke="#3ab0c0"/></svg></div>
      <div class="w-[20px] h-[19px] flex items-center justify-center"><svg class="w-[14px] h-[14px]" viewBox="0 0 14 14"><path d="M1 12c0-3 2-4 4-4l6-7 2 2-7 7c0 2-2 3-5 2z" fill="#cfcfcf"/><path d="M10 9l3 3-3 1z" fill="#3ab0c0"/></svg></div>
      <div class="w-[10px] flex justify-center"><svg class="w-[5px] h-[18px]"><use href="#h"/></svg></div>
      <div class="w-[19px] h-[19px] mr-[1px] rounded-[2px] bg-[#5285a6] flex items-center justify-center"><svg class="w-[14px] h-[14px]" viewBox="0 0 14 14"><path d="M.5.5h13v13H.5zM5 .5v13M9.500.5v13M.5 5h13M.5 9.500h13" fill="none" stroke="#e8e8e8"/></svg></div>
      <div class="w-[20px] h-[19px] flex items-center justify-center"><svg class="w-[14px] h-[12px]" viewBox="0 0 14 12"><path d="M.5.5h13v11H.5zM3 .5v2M6 .5v2M9 .5v2M12 .5v2M3 9.500v2M6 9.500v2M9 9.500v2M12 9.500v2M.5 2.500h13M.5 9.500h13" fill="none" stroke="#cfcfcf"/></svg></div>
      <div class="w-[20px] h-[19px] flex items-center justify-center"><svg class="w-[14px] h-[12px]" viewBox="0 0 14 12"><rect x=".5" y=".5" width="13" height="11" fill="none" stroke="#cfcfcf"/><circle cx="7" cy="6" r="2.500" fill="#3ab0c0"/></svg></div>
      <div class="w-[19px] h-[19px] mr-[1px] rounded-[3px] bg-[#3a3a3a] border border-[#2b2b2b] flex items-center justify-center"><div class="w-[9px] h-[9px] rounded-full bg-[#5a5a5a]"></div></div>
      <div class="w-[20px] h-[19px] flex items-center justify-center"><svg class="w-[14px] h-[12px]" viewBox="0 0 14 12"><rect x=".5" y=".5" width="13" height="11" fill="none" stroke="#cfcfcf"/><path d="M2 6h10M7 2v8" stroke="#3ab0c0" stroke-dasharray="1.500 1"/></svg></div>
      <div class="w-[20px] h-[19px] flex items-center justify-center"><svg class="w-[14px] h-[12px]" viewBox="0 0 14 12"><rect x=".5" y=".5" width="13" height="11" fill="none" stroke="#cfcfcf"/><circle cx="8" cy="5" r="1.500" fill="#3ab0c0"/><path d="M3 9l3-3 2 3z" fill="#3ab0c0"/></svg></div>
      <div class="w-[20px] h-[19px] flex items-center justify-center"><svg class="w-[14px] h-[12px]" viewBox="0 0 14 12"><rect x=".5" y=".5" width="13" height="11" fill="none" stroke="#cfcfcf"/><path d="M4 3h6v2H8v4H6V5H4z" fill="#3ab0c0"/></svg></div>
      <div class="w-[11px] flex justify-center"><svg class="w-[5px] h-[18px]"><use href="#h"/></svg></div>
      <div class="w-[20px] h-[19px] flex items-center justify-center"><svg class="w-[14px] h-[15px]" viewBox="0 0 14 15"><path d="M7 .7l6 3.400v6.800l-6 3.400-6-3.400V4.100zM1 4.100l6 3.400 6-3.400M7 7.500v6.800" fill="none" stroke="#3ab0c0"/></svg></div>
      <div class="w-[19px] h-[19px] mr-[1px] rounded-[2px] bg-[#5285a6] flex items-center justify-center"><svg class="w-[14px] h-[15px]" viewBox="0 0 14 15"><path d="M7 .7l6 3.400v6.800l-6 3.400-6-3.400V4.100z" fill="#c8c8c8" stroke="#333"/><path d="M1 4.100l6 3.400 6-3.400M7 7.500v6.800" fill="none" stroke="#333"/></svg></div>
      <div class="w-[20px] h-[19px] flex items-center justify-center"><svg class="w-[14px] h-[14px]" viewBox="0 0 14 14"><path d="M7 1a6 6 0 0 0 0 12z" fill="#d8d8d8"/><path d="M8 2h2v2H8zM11 5h2v2h-2zM8 6h2v2H8zM11 9h2v2h-2zM8 10h2v2H8z" fill="#d8d8d8"/></svg></div>
      <div class="w-[20px] h-[19px] flex items-center justify-center"><svg class="w-[14px] h-[15px]" viewBox="0 0 14 15"><path d="M7 .7l6 3.400v6.800l-6 3.400-6-3.400V4.100z" fill="none" stroke="#3ab0c0"/><path d="M7 3.500l3.500 2v4l-3.500 2-3.500-2v-4z" fill="#3ab0c0" stroke="#cfe0e6" stroke-width=".5"/></svg></div>
      <div class="w-[19px] h-[19px] mr-[1px] rounded-[2px] bg-[#5285a6] flex items-center justify-center"><svg class="w-[15px] h-[15px]" viewBox="0 0 16 16"><circle cx="8" cy="8" r="7" fill="#e0e0e0"/><path d="M4 3h3v3H4zM10 3h3v3h-3zM7 6h3v3H7zM2 9h3v3H2zM10 9h3v3h-3zM6 12h3v3H6z" fill="#333"/></svg></div>
      <div class="w-[20px] h-[19px] flex items-center justify-center"><svg class="w-[16px] h-[16px]" viewBox="0 0 16 16"><circle cx="8" cy="7" r="3.500" fill="#e0e0e0"/><rect x="6.500" y="10" width="3" height="3" fill="#e0e0e0"/><path d="M1 7h2M13 7h2M3 2l1.500 1.500M13 2l-1.500 1.500" stroke="#aaa"/></svg></div>
      <div class="w-[20px] h-[19px] flex items-center justify-center"><svg class="w-[16px] h-[12px]" viewBox="0 0 16 12"><circle cx="10.500" cy="6" r="5" fill="#37a3b8"/><path d="M1 8l5-4M2 11l4-3" stroke="#aaa"/></svg></div>
      <div class="w-[10px] flex justify-center"><svg class="w-[5px] h-[18px]"><use href="#h"/></svg></div>
      <div class="w-[20px] h-[19px] flex items-center justify-center"><svg class="w-[14px] h-[14px]" viewBox="0 0 14 14"><circle cx="7" cy="5" r="5" fill="#bbb"/><path d="M1 9c2 3 10 3 12 0M3 12c2 2 6 2 8 0" fill="none" stroke="#37a3b8"/></svg></div>
      <div class="w-[20px] h-[19px] flex items-center justify-center"><svg class="w-[16px] h-[12px]" viewBox="0 0 16 12"><circle cx="10" cy="6" r="5.500" fill="#ddd"/><circle cx="5" cy="6" r="4.500" fill="none" stroke="#aaa"/></svg></div>
      <div class="w-[19px] h-[19px] mr-[1px] rounded-[2px] bg-[#5285a6] flex items-center justify-center"><svg class="w-[14px] h-[14px]" viewBox="0 0 14 14"><circle cx="7" cy="7" r="6" fill="none" stroke="#d8d8d8" stroke-width="1.500"/><circle cx="7" cy="7" r="3.500" fill="none" stroke="#26343c"/></svg></div>
      <div class="w-[19px] h-[19px] mr-[1px] rounded-[3px] bg-[#3a3a3a] border border-[#2b2b2b] flex items-center justify-center"><div class="w-[11px] h-[11px] bg-[#3e5362]"></div></div>
      <div class="w-[12px] flex justify-center"><svg class="w-[5px] h-[18px]"><use href="#h"/></svg></div>
      <div class="w-[20px] h-[19px] flex items-center justify-center"><svg class="w-[15px] h-[15px]" viewBox="0 0 15 15"><rect x=".5" y=".5" width="9" height="8" fill="none" stroke="#3ab0c0" stroke-dasharray="2 1"/><path d="M7 4v10l2.500-2 1.500 3 1.500-1-1.500-3h3z" fill="#cfcfcf"/></svg></div>
      <div class="w-[12px] flex justify-center"><svg class="w-[5px] h-[18px]"><use href="#h"/></svg></div>
      <div class="w-[20px] h-[19px] flex items-center justify-center"><svg class="w-[14px] h-[13px]" viewBox="0 0 14 13"><rect x="5" y="0" width="9" height="8" fill="#cfcfcf"/><rect x="7" y="2" width="4" height="4" fill="#444"/><rect x="0" y="5" width="8" height="8" fill="#cfcfcf"/><rect x="2" y="7" width="4" height="4" fill="#444"/></svg></div>
      <div class="w-[20px] h-[19px] flex items-center justify-center"><svg class="w-[14px] h-[13px]" viewBox="0 0 14 13"><rect x="5.500" y=".5" width="8" height="7" fill="none" stroke="#cfcfcf"/><rect x="8" y="3" width="3" height="2" fill="#cfcfcf"/><path d="M0 5h5v3h3v5H0z" fill="#37a3b8"/></svg></div>
      <div class="w-[19px] h-[19px] mr-[1px] rounded-[2px] bg-[#5285a6] flex items-center justify-center"><svg class="w-[15px] h-[15px]" viewBox="0 0 15 15"><rect x=".5" y=".5" width="14" height="14" fill="none" stroke="#e0e0e0"/><rect x="3" y="3" width="9" height="9" fill="#2e4b5e"/><path d="M4 4l7 7" stroke="#7fd0dc"/><circle cx="5" cy="5" r="1.500" fill="#7fd0dc"/></svg></div>
      <div class="w-[11px] flex justify-center"><svg class="w-[5px] h-[18px]"><use href="#h"/></svg></div>
      <div class="w-[20px] h-[19px] flex items-center justify-center"><svg class="w-[14px] h-[14px]" viewBox="0 0 14 14"><circle cx="7" cy="7" r="5" fill="none" stroke="#cfcfcf" stroke-width="3.500"/><path d="M7 0v4M14 7h-4M7 14v-4M0 7h4" stroke="#444"/></svg></div>
      <div class="w-[38px] h-[15px] ml-[2px] mt-[1px] rounded-[2px] bg-[#2b2b2b] flex items-center justify-center text-[#b4b4b4]">0.00</div>
      <div class="w-[24px] h-[19px] flex items-center justify-center"><svg class="w-[11px] h-[13px]" viewBox="0 0 11 13"><path d="M5 1a5.500 5.500 0 0 0 0 11z" fill="#aaa"/><path d="M6 1h5v11H6z" fill="#e0e0e0"/></svg></div>
      <div class="w-[38px] h-[15px] mt-[1px] rounded-[2px] bg-[#2b2b2b] flex items-center justify-center text-[#b4b4b4]">1.00</div>
      <div class="w-[19px] h-[19px] ml-[2px] mr-[4px] rounded-[2px] bg-[#5285a6] flex items-center justify-center"><svg class="w-[15px] h-[15px]" viewBox="0 0 15 15"><circle cx="7.500" cy="7.500" r="6.500" fill="#37a3b8" stroke="#222" stroke-width=".7"/><path d="M4 6.500h2v2H4zM8 6v3M8 6l2.500 3V6" fill="none" stroke="#223540" stroke-width=".7"/></svg></div>
      <div class="w-[138px] h-[17px] rounded-[2px] flex overflow-hidden bg-[#585858]">
        <div class="flex-1 flex items-center pl-[3px] text-[#dedede]">sRGB gamma</div>
        <div class="w-[19px] border-l border-[#444] flex items-center justify-center"><svg class="w-[9px] h-[5px]" viewBox="0 0 9 5"><path d="M0 0h9L4.500 5z" fill="#bdbdbd"/></svg></div>
      </div>
    </div>
    <div class="flex-1 relative bg-white overflow-hidden pl-[15px] text-[#1c4a2c] font-bold text-[10px] font-['Liberation_Sans',sans-serif]">
      <div class="h-[20px] pt-[3px]">Verts:</div>
      <div class="h-[20px] pt-[3px]">Edges:</div>
      <div class="h-[20px] pt-[3px]">Faces:</div>
      <div class="h-[20px] pt-[3px]">Tris:</div>
      <div class="h-[20px] pt-[3px]">UVs:</div>
      <svg class="absolute left-[414px] top-[125px] w-[426px] h-[430px]" viewBox="0 0 426 430" shape-rendering="crispEdges"><polygon fill="#ff6e00" points="425,215 422.400,248.600 414.600,281.400 401.900,312.600 384.500,341.400 362.900,367 337.600,388.900 309.200,406.600 278.500,419.500 246.200,427.400 213,430 179.800,427.400 147.500,419.500 116.800,406.600 88.400,388.900 63.100,367 41.500,341.400 24.100,312.600 11.400,281.400 3.600,248.600 1,215 3.600,181.400 11.400,148.600 24.100,117.400 41.500,88.600 63.100,63 88.400,41.100 116.800,23.400 147.500,10.500 179.800,2.600 213,0 246.200,2.600 278.500,10.500 309.200,23.400 337.600,41.100 362.900,63 384.500,88.600 401.900,117.400 414.600,148.600 422.400,181.400"/></svg>
      <svg class="absolute left-[681px] top-[429px] w-[24px] h-[24px]" viewBox="0 0 24 24"><rect x="2" y="2" width="10" height="10" fill="#ff6e00" stroke="#111" stroke-width="1.500"/><rect x=".7" y=".7" width="12.600" height="12.600" fill="none" stroke="#fff"/><path d="M8 7v11l3-3 5 6 3-3-5-5 4-1z" fill="#fff" stroke="#222"/></svg>
      <div class="absolute left-[22px] bottom-[9px] text-[#1c6a3c] text-[9px]">y</div>
      <div class="absolute left-[25px] bottom-0 w-[1px] h-[6px] bg-[#1c4a2c]"></div>
    </div>
  </main>
</div>
</body>
</html>
